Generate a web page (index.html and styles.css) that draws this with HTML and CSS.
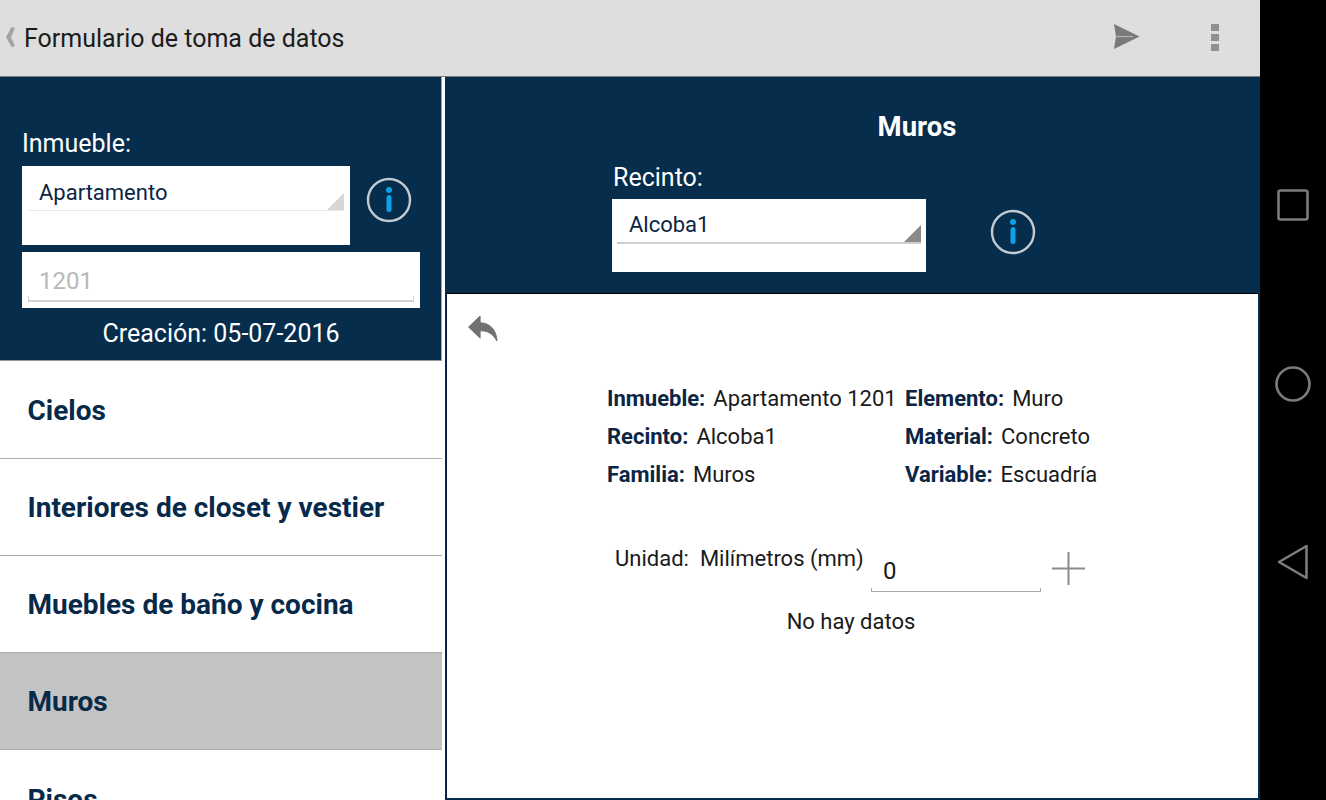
FILE: index.html
```html
<!DOCTYPE html>
<html lang="es">
<head>
<meta charset="utf-8">
<title>Formulario de toma de datos</title>
<link rel="stylesheet" href="styles.css">
</head>
<body>
<div class="screen">
  <div class="app">
    <header class="topbar">
      <svg class="chev" width="12" height="22" viewBox="0 0 12 22"><path d="M8.5 1 L3 11 L8.5 21 L12 20 L8 11 L12 2 Z" fill="#a3a3a3"/></svg>
      <h1 class="title">Formulario de toma de datos</h1>
      <svg class="send" width="27" height="27" viewBox="0 0 27 27"><path d="M1 1 L26.5 13.5 L1 26 L3 13.5 Z" fill="#7a7a7a"/><path d="M3.5 13.5 H20" stroke="#b4b4b4" stroke-width="1.2"/></svg>
      <div class="dots"><span></span><span></span><span></span></div>
    </header>
    <div class="main">
      <aside class="left">
        <section class="left-head">
          <label class="lbl">Inmueble:</label>
          <div class="row-sel">
            <div class="select sel-a"><div class="sel-line"><span>Apartamento</span><i class="tri tri-light"></i></div></div>
            <svg class="info info-a" width="46" height="46" viewBox="0 0 46 46"><circle cx="23" cy="23" r="21" fill="none" stroke="#c4cbd0" stroke-width="2.4"/><circle cx="23" cy="13" r="3" fill="#0ea0ea"/><rect x="20.5" y="18" width="5" height="17" rx="2.5" fill="#0ea0ea"/></svg>
          </div>
          <div class="input-box"><div class="input-line">1201</div></div>
          <div class="created">Creación: 05-07-2016</div>
        </section>
        <nav class="list">
          <div class="item">Cielos</div>
          <div class="item">Interiores de closet y vestier</div>
          <div class="item">Muebles de baño y cocina</div>
          <div class="item active">Muros</div>
          <div class="item">Pisos</div>
        </nav>
      </aside>
      <main class="right">
        <section class="right-head">
          <h2 class="r-title">Muros</h2>
          <label class="lbl r-lbl">Recinto:</label>
          <div class="row-sel r-row">
            <div class="select sel-b"><div class="sel-line"><span>Alcoba1</span><i class="tri tri-dark"></i></div></div>
            <svg class="info info-b" width="46" height="46" viewBox="0 0 46 46"><circle cx="23" cy="23" r="21" fill="none" stroke="#c4cbd0" stroke-width="2.4"/><circle cx="23" cy="13" r="3" fill="#0ea0ea"/><rect x="20.5" y="18" width="5" height="17" rx="2.5" fill="#0ea0ea"/></svg>
          </div>
        </section>
        <section class="body">
          <svg class="reply" width="32" height="27" viewBox="0 0 32 28"><path d="M13 1 L1 12.5 L13 24 L13 16.5 C20 16 26 19 30.5 27 C30 16 24 8.5 13 8 Z" fill="#717171" stroke="#717171" stroke-width="1" stroke-linejoin="round"/></svg>
          <div class="grid">
            <div class="cell"><b>Inmueble:</b><span>Apartamento 1201</span></div>
            <div class="cell"><b>Elemento:</b><span>Muro</span></div>
            <div class="cell"><b>Recinto:</b><span>Alcoba1</span></div>
            <div class="cell"><b>Material:</b><span>Concreto</span></div>
            <div class="cell"><b>Familia:</b><span>Muros</span></div>
            <div class="cell"><b>Variable:</b><span>Escuadría</span></div>
          </div>
          <div class="unit-row">
            <div class="unit"><span>Unidad:</span><span>Milímetros (mm)</span></div>
            <div class="num">0</div>
            <svg class="plus" width="33" height="33" viewBox="0 0 33 33"><path d="M16.5 0 V33 M0 16.5 H33" stroke="#8a8a8a" stroke-width="2" fill="none"/></svg>
          </div>
          <p class="empty">No hay datos</p>
        </section>
      </main>
    </div>
  </div>
  <div class="navbar">
    <svg class="nav-sq" width="32" height="32" viewBox="0 0 32 32"><rect x="1.5" y="1.5" width="29" height="29" rx="2" fill="none" stroke="#7c7c7c" stroke-width="2.6"/></svg>
    <svg class="nav-ci" width="36" height="36" viewBox="0 0 36 36"><circle cx="18" cy="18" r="16.5" fill="none" stroke="#7c7c7c" stroke-width="2.6"/></svg>
    <svg class="nav-tr" width="32" height="36" viewBox="0 0 32 36"><path d="M29.5 2 V34 L2 18 Z" fill="none" stroke="#7c7c7c" stroke-width="2.6" stroke-linejoin="round"/></svg>
  </div>
</div>
</body>
</html>
```
FILE: styles.css
```css
* { box-sizing: border-box; }
html, body { margin: 0; padding: 0; background: #000; }
body { font-family: Roboto, "Noto Sans", sans-serif; }
.screen { width: 1326px; height: 800px; display: flex; overflow: hidden; }
.app { width: 1260px; height: 800px; display: flex; flex-direction: column; background: #fff; }

.topbar { height: 77px; flex: none; background: #dedede; border-bottom: 1px solid #77797c; display: flex; align-items: center; padding-left: 3px; }
.chev { margin-top: -2px; }
.title { margin: 0 0 0 9px; font-size: 25px; font-weight: 400; color: #1c1c1c; flex: 1; }
.send { margin-right: 71px; margin-top: -3px; }
.dots { width: 8px; margin-right: 41px; margin-top: -2px; display: flex; flex-direction: column; gap: 3px; }
.dots span { height: 7px; background: #909090; }

.main { flex: 1; display: flex; min-height: 0; }
.left { width: 445px; flex: none; border-right: 3px solid #fff; overflow: hidden; }
.left-head { height: 284px; background: #062d4b; border-bottom: 1px solid #8e97a0; border-right: 1px solid #9aa3ab; padding: 51px 0 0 22px; }
.lbl { display: block; color: #fff; font-size: 25px; line-height: 32px; }
.row-sel { display: flex; align-items: flex-start; margin-top: 6px; }
.select { background: #fff; padding: 0 5px 0 0; }
.sel-a { width: 328px; height: 79px; padding: 0 6px; }
.sel-line { position: relative; height: 45px; border-bottom: 1px solid #e8e8e8; padding: 11px 0 0 11px; font-size: 22px; line-height: 32px; color: #0b2545; }
.tri { position: absolute; right: 0; bottom: 0; width: 0; height: 0; border-style: solid; border-width: 0 0 17px 17px; border-color: transparent; }
.tri-light { border-bottom-color: #d6d6d6; }
.tri-dark { border-bottom-color: #8a8a8a; }
.info-a { margin: 11px 0 0 16px; }
.input-box { width: 398px; height: 56px; margin-top: 7px; background: #fff; padding: 0 6px; }
.input-line { height: 50px; border: 1px solid #d4d4d4; border-top: 0; border-bottom-width: 2px; border-image: linear-gradient(to bottom, transparent 0, transparent 45px, #d4d4d4 45px) 1; padding: 13px 0 0 10px; font-size: 24px; line-height: 32px; color: #b9b9b9; }
.created { width: 398px; margin-top: 10px; text-align: center; color: #fff; font-size: 25px; line-height: 32px; }

.list { display: flex; flex-direction: column; padding-top: 1px; }
.item { height: 97px; flex: none; border-bottom: 1px solid #a9aeb2; padding: 1px 0 0 27.5px; display: flex; align-items: center; font-size: 28px; font-weight: 700; color: #082a4a; }
.item.active { background: #c3c3c3; }
.item:last-child { border-bottom: 0; }

.right { flex: 1; display: flex; flex-direction: column; background: #062d4b; padding: 0 2px 2px 0; min-width: 0; }
.right-head { height: 216px; flex: none; padding-top: 34px; }
.r-title { margin: 0; text-align: center; font-size: 27.5px; line-height: 32px; font-weight: 700; color: #fff; padding-left: 131px; width: 813px; }
.r-lbl { margin: 19px 0 0 168px; }
.r-row { margin: 5px 0 0 167px; }
.sel-b { width: 314px; height: 73px; padding: 0 5px; }
.sel-b .sel-line { height: 45px; border-bottom: 2px solid #cfcfcf; padding: 10px 0 0 12px; }
.info-b { margin: 10px 0 0 64px; }

.body { flex: 1; background: #fff; margin-left: 1px; border-left: 1px solid #0a1a40; border-top: 1px solid #000; min-height: 0; padding: 21px 0 0 20px; }
.reply { display: block; }
.grid { display: grid; grid-template-columns: 298px auto; margin: 37px 0 0 140px; }
.cell { height: 38px; display: flex; align-items: center; gap: 8px; font-size: 22px; color: #1a1a1a; white-space: nowrap; }
.cell b { font-weight: 700; color: #0b2545; }
.unit-row { display: flex; margin: 50px 0 0 148px; align-items: flex-start; height: 60px; }
.unit { display: flex; gap: 11px; font-size: 22px; line-height: 32px; color: #1a1a1a; width: 256px; white-space: nowrap; }
.num { width: 170px; height: 40px; margin-top: 9px; border: 1px solid #a8a8a8; border-top: 0; border-image: linear-gradient(to bottom, transparent 0, transparent 36px, #a8a8a8 36px) 1; padding-left: 11px; font-size: 24px; line-height: 28px; padding-top: 5px; color: #1a1a1a; }
.plus { margin: 9px 0 0 11px; }
.empty { margin: 3px 0 0; width: 768px; text-align: center; font-size: 22px; line-height: 32px; color: #1a1a1a; }

.navbar { width: 66px; height: 800px; flex: none; background: #000; display: flex; flex-direction: column; align-items: center; padding-top: 189px; }
.nav-ci { margin-top: 145px; }
.nav-tr { margin-top: 142px; }
```
